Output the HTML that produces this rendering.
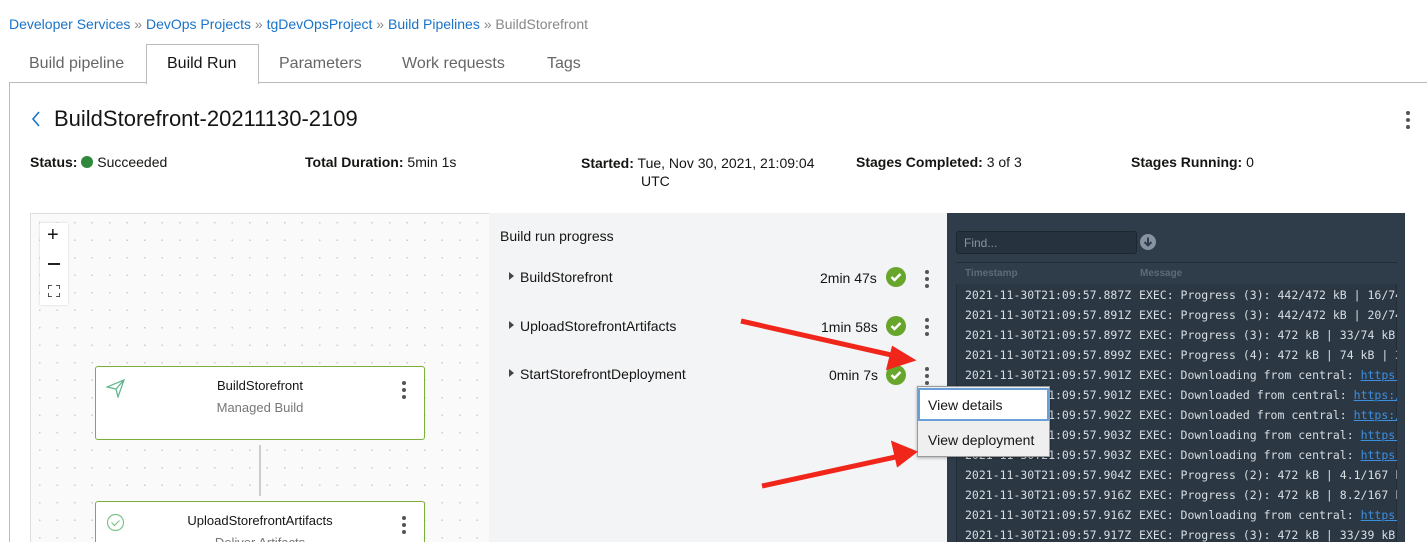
<!DOCTYPE html>
<html><head><meta charset="utf-8"><style>
*{box-sizing:border-box;margin:0;padding:0}
html,body{width:1427px;height:542px;overflow:hidden}
body{background:#fff;font-family:"Liberation Sans",sans-serif;color:#161513;position:relative}
.a{position:absolute;white-space:nowrap}
.crumb{top:16px;left:9px;font-size:14px;color:#888}
.crumb a{color:#1a73c8;text-decoration:none}
.tab{top:55px;font-size:16px;color:#666}
.mono{font-family:"DejaVu Sans Mono","Liberation Mono",monospace;font-size:11.5px;color:#d8dde2}
.dots{position:absolute;width:4px}
.dots i{display:block;width:4px;height:4px;border-radius:2px;background:#555;margin-bottom:3px}
.chk{position:absolute;width:20px;height:20px;border-radius:10px;background:#67a52b}
.tri{position:absolute;width:0;height:0;border-left:5px solid #444;border-top:4px solid transparent;border-bottom:4px solid transparent}
</style></head><body>
<div class="a crumb"><a>Developer Services</a> » <a>DevOps Projects</a> » <a>tgDevOpsProject</a> » <a>Build Pipelines</a> » BuildStorefront</div>
<div class="a" style="left:9px;top:82px;width:1430px;height:470px;border:1px solid #bbb"></div>
<div class="a" style="left:146px;top:44px;width:113px;height:40px;border:1px solid #bbb;border-bottom:none;background:#fff"></div>
<div class="a tab" style="left:29px">Build pipeline</div>
<div class="a tab" style="left:167px;color:#161513">Build Run</div>
<div class="a tab" style="left:279px">Parameters</div>
<div class="a tab" style="left:402px">Work requests</div>
<div class="a tab" style="left:547px">Tags</div>
<svg class="a" style="left:30px;top:110px" width="12" height="18"><path d="M9 2 L3 9 L9 16" stroke="#1a73c8" stroke-width="1.6" fill="none"/></svg>
<div class="a" style="left:54px;top:106px;font-size:22px">BuildStorefront-20211130-2109</div>
<div class="dots" style="left:1406px;top:111px"><i></i><i></i><i></i></div>
<div class="a" style="left:30px;top:154px;font-size:14px"><b>Status:</b> <span style="display:inline-block;width:12px;height:12px;border-radius:6px;background:#2e8a3a;vertical-align:-1px"></span> Succeeded</div>
<div class="a" style="left:305px;top:154px;font-size:14px"><b>Total Duration:</b> 5min 1s</div>
<div class="a" style="left:581px;top:154px;font-size:14px;line-height:18px"><b>Started:</b> Tue, Nov 30, 2021, 21:09:04<br><span style="padding-left:60px">UTC</span></div>
<div class="a" style="left:856px;top:154px;font-size:14px"><b>Stages Completed:</b> 3 of 3</div>
<div class="a" style="left:1131px;top:154px;font-size:14px"><b>Stages Running:</b> 0</div>
<div class="a" style="left:30px;top:213px;width:460px;height:340px;border:1px solid #ddd;background-color:#fafafa;background-image:radial-gradient(#ccc 0.8px,transparent 1px);background-size:17.5px 17.5px"></div>
<div class="a" style="left:40px;top:223px;width:28px;height:82px;background:#fff;box-shadow:0 0 2px #ccc"></div>
<div class="a" style="left:47px;top:224px;font-size:20px">+</div>
<div class="a" style="left:48px;top:263px;width:12px;height:1.5px;background:#222"></div>
<svg class="a" style="left:48px;top:285px" width="12" height="12"><path d="M0 4V0H4M8 0H12V4M12 8V12H8M4 12H0V8" stroke="#222" stroke-width="1.5" fill="none"/></svg>
<div class="a" style="left:95px;top:366px;width:330px;height:74px;border:1.5px solid #7ab03a;border-radius:3px;background:#fff"></div>
<svg class="a" style="left:106px;top:379px" width="20" height="19"><path d="M1 8 L18 1 L12 18 L10 10 Z M10 10 L18 1" stroke="#5bb48a" stroke-width="1.2" fill="none"/></svg>
<div class="a" style="left:95px;top:378px;width:330px;text-align:center;font-size:13px">BuildStorefront</div>
<div class="a" style="left:95px;top:400px;width:330px;text-align:center;font-size:13px;color:#777">Managed Build</div>
<div class="dots" style="left:402px;top:381px"><i></i><i></i><i></i></div>
<div class="a" style="left:259px;top:445px;width:1.5px;height:51px;background:#ccc"></div>
<div class="a" style="left:95px;top:501px;width:330px;height:60px;border:1.5px solid #7ab03a;border-radius:3px;background:#fff"></div>
<svg class="a" style="left:106px;top:513px" width="19" height="19"><circle cx="9.5" cy="9.5" r="8" stroke="#7cc48a" stroke-width="1.2" fill="none"/><path d="M5.5 9.5l3 3 5-5" stroke="#7cc48a" stroke-width="1.2" fill="none"/></svg>
<div class="a" style="left:95px;top:513px;width:330px;text-align:center;font-size:13px">UploadStorefrontArtifacts</div>
<div class="a" style="left:95px;top:535px;width:330px;text-align:center;font-size:13px;color:#777">Deliver Artifacts</div>
<div class="dots" style="left:402px;top:516px"><i></i><i></i><i></i></div>
<div class="a" style="left:489px;top:213px;width:459px;height:340px;background:#f3f4f6"></div>
<div class="a" style="left:500px;top:228px;font-size:14px">Build run progress</div>
<div class="tri" style="left:509px;top:272px"></div><div class="tri" style="left:509px;top:321px"></div><div class="tri" style="left:509px;top:369px"></div>
<div class="a" style="left:520px;top:269px;font-size:14px">BuildStorefront</div>
<div class="a" style="left:520px;top:318px;font-size:14px">UploadStorefrontArtifacts</div>
<div class="a" style="left:520px;top:366px;font-size:14px">StartStorefrontDeployment</div>
<div class="a" style="left:820px;top:270px;font-size:14px">2min 47s</div>
<div class="a" style="left:821px;top:319px;font-size:14px">1min 58s</div>
<div class="a" style="left:829px;top:367px;font-size:14px">0min 7s</div>
<div class="chk" style="left:886px;top:267px"></div><div class="chk" style="left:886px;top:316px"></div><div class="chk" style="left:886px;top:365px"></div>
<svg class="a" style="left:886px;top:267px" width="20" height="120"><g stroke="#fff" stroke-width="2.5" fill="none"><path d="M5.5 10l3 3 6-6"/><path d="M5.5 59l3 3 6-6"/><path d="M5.5 108l3 3 6-6"/></g></svg>
<div class="dots" style="left:925px;top:270px"><i></i><i></i><i></i></div>
<div class="dots" style="left:925px;top:318px"><i></i><i></i><i></i></div>
<div class="dots" style="left:925px;top:367px"><i></i><i></i><i></i></div>
<div class="a" style="left:947px;top:213px;width:458px;height:340px;background:#2f3d4b"></div>
<div class="a" style="left:956px;top:231px;width:181px;height:23px;background:#26323e;border:1px solid #1c262f;border-radius:3px;color:#8894a0;font-size:12px;padding:4px 7px">Find...</div>
<div class="a" style="left:1140px;top:234px;width:16px;height:16px;border-radius:8px;background:#8793a0"></div>
<svg class="a" style="left:1140px;top:234px" width="16" height="16"><path d="M8 3.5V11M4.5 8L8 11.5 11.5 8" stroke="#2f3d4b" stroke-width="2" fill="none"/></svg>
<div class="a" style="left:956px;top:262px;width:441px;height:290px;background:#2b3844;border:1px solid #222c36"></div>
<div class="a" style="left:956px;top:263px;width:441px;height:21px;background:#2f3d4b"></div>
<div class="a" style="left:965px;top:268px;font-size:10px;font-weight:bold;color:#5d6b78">Timestamp</div>
<div class="a" style="left:1140px;top:268px;font-size:10px;font-weight:bold;color:#5d6b78">Message</div>
<div class="a mono" style="left:965px;top:285px;line-height:20px">2021-11-30T21:09:57.887Z<br>2021-11-30T21:09:57.891Z<br>2021-11-30T21:09:57.897Z<br>2021-11-30T21:09:57.899Z<br>2021-11-30T21:09:57.901Z<br>2021-11-30T21:09:57.901Z<br>2021-11-30T21:09:57.902Z<br>2021-11-30T21:09:57.903Z<br>2021-11-30T21:09:57.903Z<br>2021-11-30T21:09:57.904Z<br>2021-11-30T21:09:57.916Z<br>2021-11-30T21:09:57.916Z<br>2021-11-30T21:09:57.917Z</div>
<div class="a mono" style="left:1139px;top:285px;line-height:20px;width:258px;overflow:hidden">EXEC: Progress (3): 442/472 kB | 16/74 kB<br>EXEC: Progress (3): 442/472 kB | 20/74 kB<br>EXEC: Progress (3): 472 kB | 33/74 kB | 4<br>EXEC: Progress (4): 472 kB | 74 kB | 33<br>EXEC: Downloading from central: <u style="color:#3d8fe0">https://</u><br>EXEC: Downloaded from central: <u style="color:#3d8fe0">https://</u><br>EXEC: Downloaded from central: <u style="color:#3d8fe0">https://</u><br>EXEC: Downloading from central: <u style="color:#3d8fe0">https://</u><br>EXEC: Downloading from central: <u style="color:#3d8fe0">https://</u><br>EXEC: Progress (2): 472 kB | 4.1/167 kB<br>EXEC: Progress (2): 472 kB | 8.2/167 kB<br>EXEC: Downloading from central: <u style="color:#3d8fe0">https://</u><br>EXEC: Progress (3): 472 kB | 33/39 kB |</div>
<div class="a" style="left:917px;top:386px;width:133px;height:71px;background:#efefef;border:1px solid #999;box-shadow:0 1px 3px rgba(0,0,0,.3)"></div>
<div class="a" style="left:918px;top:388px;width:131px;height:33px;background:#fff;border:2px solid #6a9fd8"></div>
<div class="a" style="left:928px;top:397px;font-size:14px">View details</div>
<div class="a" style="left:928px;top:432px;font-size:14px">View deployment</div>
<svg class="a" style="left:0;top:0" width="1427" height="542"><g fill="#f0261b" stroke="#f0261b"><path d="M741 321 L900 357" stroke-width="5"/><path d="M913 360 L893 348 L888 368 Z" stroke-width="3"/><path d="M762 486 L900 456" stroke-width="5"/><path d="M915 452 L893 443 L898 465 Z" stroke-width="3"/></g></svg>
</body></html>
